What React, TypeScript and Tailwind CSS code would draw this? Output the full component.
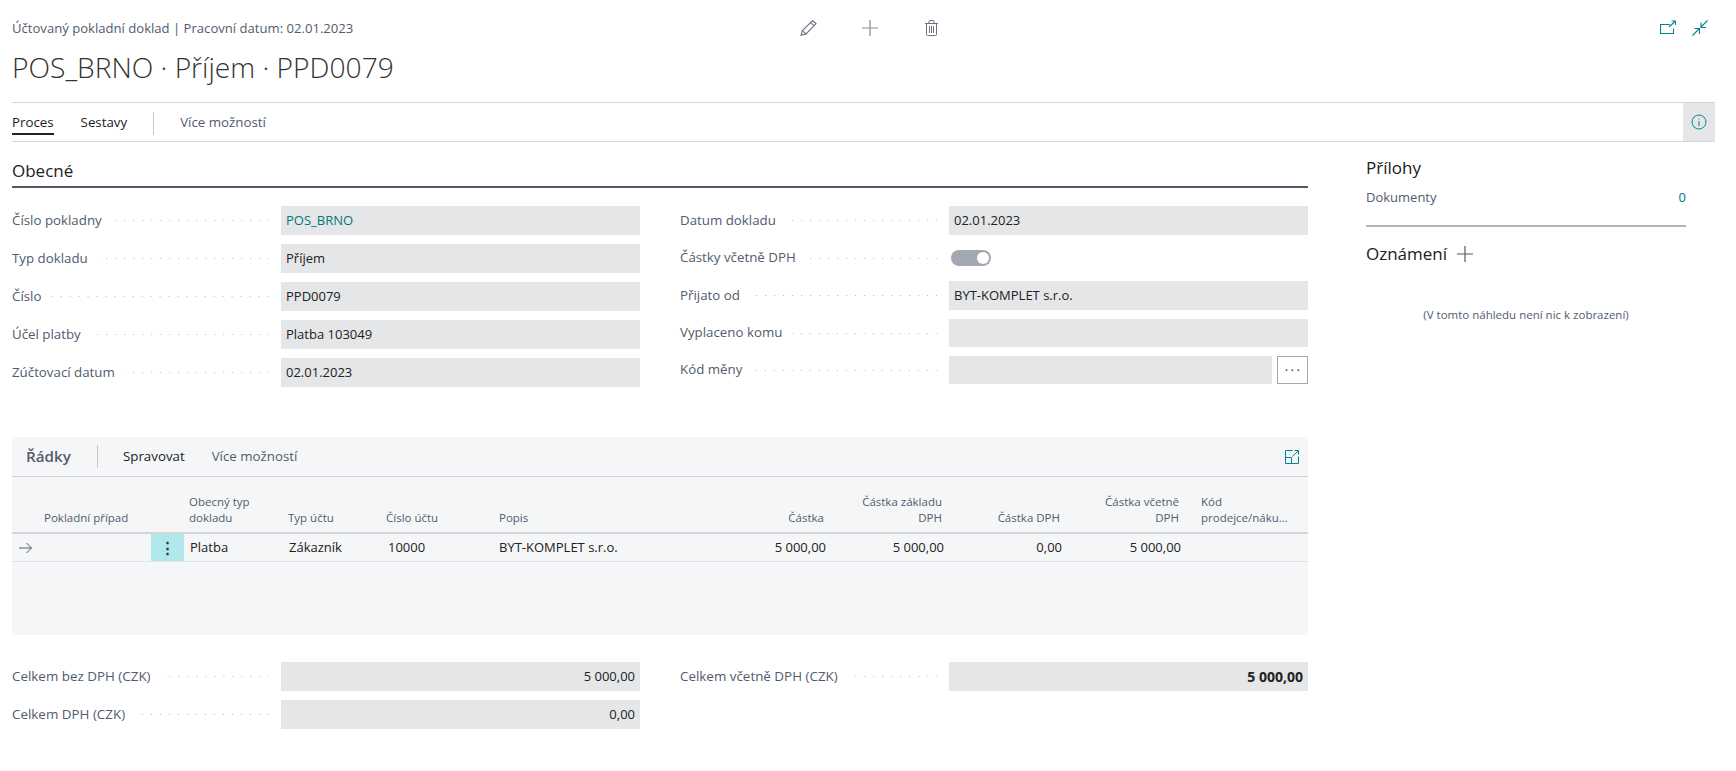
import type { ReactNode } from 'react';

const font = "font-['Open_Sans',sans-serif]";

// teal used by links and the small action icons
const teal = '#00868c';

const columns = 'grid-cols-[33px_106px_33px_104px_98px_113px_200px_127px_118px_118px_119px_20px_107px]';

function Leader() {
  return <div className="h-px flex-1 min-w-0 bg-[linear-gradient(to_left,#b4b8be_1px,transparent_1px)] bg-[length:9px_1px] bg-repeat-x bg-right" />;
}

function Field({ label, value, link, height = 'h-[29px]', children }: { label: string; value?: string; link?: boolean; height?: string; children?: ReactNode }) {
  return (
    <div className={`flex items-center ${height}`}>
      <div className="flex items-center w-[257px] shrink-0 gap-2.5">
        <span className="text-[13.3px] text-[#505c6d] whitespace-nowrap">{label}</span>
        <Leader />
      </div>
      <div className="ml-3 flex-1 h-full">
        {children ?? (
          <div className={`h-full bg-[#e5e6e8] px-[5px] flex items-center text-[13px] ${link ? 'text-[#00777c]' : 'text-[#212121]'}`}>{value}</div>
        )}
      </div>
    </div>
  );
}

function Total({ label, value, bold }: { label: string; value: string; bold?: boolean }) {
  return (
    <div className="flex items-center h-[29px]">
      <div className="flex items-center w-[257px] shrink-0 gap-2.5">
        <span className="text-[13.4px] text-[#505c6d] whitespace-nowrap">{label}</span>
        <Leader />
      </div>
      <div className={`ml-3 flex-1 h-full bg-[#e5e6e8] px-[5px] flex items-center justify-end text-[#212121] ${bold ? 'text-[14px] font-bold' : 'text-[13px]'}`}>{value}</div>
    </div>
  );
}

function PencilIcon() {
  return (
    <svg width="17" height="16" viewBox="0 0 17 16" fill="none" stroke="#6b7280" strokeWidth="1.1">
      <path d="M12.5 0.8 L16 3.6 L6 14 L1 15.3 L2.4 10.6 Z" />
      <path d="M10.6 2.8 L14 5.6" />
      <path d="M2.4 10.6 L6 14" />
    </svg>
  );
}

function PlusIcon({ size = 16, color = '#8a8d95' }: { size?: number; color?: string }) {
  return (
    <svg width={size} height={size} viewBox="0 0 16 16" fill="none" stroke={color} strokeWidth="1.2">
      <path d="M8 0 V16 M0 8 H16" />
    </svg>
  );
}

function TrashIcon() {
  return (
    <svg width="13" height="16" viewBox="0 0 13 16" fill="none" stroke="#6b7280" strokeWidth="1">
      <path d="M0 3.5 H13 M4 3.5 V1.5 Q4 0.5 5 0.5 H8 Q9 0.5 9 1.5 V3.5 M1.5 3.5 V14.5 Q1.5 15.5 2.5 15.5 H10.5 Q11.5 15.5 11.5 14.5 V3.5 M4.5 6 V13 M6.5 6 V13 M8.5 6 V13" />
    </svg>
  );
}

function ShareIcon() {
  return (
    <svg width="16" height="16" viewBox="0 0 16 16" fill="none" stroke={teal} strokeWidth="1.1">
      <path d="M10 4.5 H0.5 V13.5 H13.5 V8.5" />
      <path d="M9 7 L15 1.5 M11.5 1 H15.5 V5" />
    </svg>
  );
}

function CollapseIcon() {
  return (
    <svg width="16" height="16" viewBox="0 0 16 16" fill="none" stroke={teal} strokeWidth="1.1">
      <path d="M15.5 0.5 L9 7 M9 2.5 V7.5 H14" />
      <path d="M0.5 15.5 L7 9 M2.5 8.5 H7.5 V14" />
    </svg>
  );
}

function ExpandIcon() {
  return (
    <svg width="14" height="14" viewBox="0 0 14 14" fill="none" stroke={teal} strokeWidth="1">
      <path d="M7.5 0.5 H0.5 V13.5 H13.5 V6.5" />
      <path d="M0.5 7.5 H6.5 V13.5" />
      <path d="M7.5 6.5 L13 1 M9.5 0.5 H13.5 V4.5" />
    </svg>
  );
}

function InfoIcon() {
  return (
    <svg width="16" height="16" viewBox="0 0 16 16" fill="none" stroke={teal} strokeWidth="1">
      <circle cx="8" cy="8" r="7" />
      <path d="M8 7 V12 M8 4.5 V5.5" />
    </svg>
  );
}

function ArrowIcon() {
  return (
    <svg width="13" height="12" viewBox="0 0 13 12" fill="none" stroke="#505c6d" strokeWidth="1">
      <path d="M0 6 H12.5 M7.5 1 L12.5 6 L7.5 11" />
    </svg>
  );
}

export default function App() {
  return (
    <div className={`${font} w-[1736px] h-[771px] overflow-hidden bg-white pl-3 text-[#212121]`}>
      <div className="w-[1703px]">
        <div className="relative h-[102px]">
          <div className="pt-[19px] text-[13.1px] leading-[18px] text-[#505c6d]">Účtovaný pokladní doklad | Pracovní datum: 02.01.2023</div>
          <h1 className="mt-[9px] text-[28.2px] leading-[42px] font-light text-[#333]">POS_BRNO · Příjem · PPD0079</h1>
          <div className="absolute top-[20px] left-[788px] flex items-center">
            <PencilIcon />
            <div className="ml-[45px]"><PlusIcon /></div>
            <div className="ml-[47px]"><TrashIcon /></div>
          </div>
          <div className="absolute top-[20px] left-[1648px] flex items-center gap-[16px]">
            <ShareIcon />
            <CollapseIcon />
          </div>
        </div>

        <div className="flex items-stretch h-[40px] border-y border-[#d4d5d8]">
          <div className="flex items-center flex-1 text-[13.3px] pt-[2px]">
            <div className="relative h-full flex items-center">
              Proces
              <div className="absolute bottom-[6px] left-0 right-0 h-[2px] bg-[#212121]" />
            </div>
            <span className="ml-[27px]">Sestavy</span>
            <div className="ml-[26px] w-px h-[23px] bg-[#c8cacd]" />
            <span className="ml-[26px] text-[#505c6d]">Více možností</span>
          </div>
          <div className="w-[32px] bg-[#e5e6e8] flex items-center justify-center"><InfoIcon /></div>
        </div>

        <div className="flex">
          <div className="w-[1296px]">
            <div className="mt-[18px] h-[28px] border-b-2 border-[#505a68] text-[17px] leading-[22px] font-medium">Obecné</div>

            <div className="mt-[18px] grid grid-cols-2 gap-x-10">
              <div className="flex flex-col gap-[9px]">
                <Field label="Číslo pokladny" value="POS_BRNO" link />
                <Field label="Typ dokladu" value="Příjem" />
                <Field label="Číslo" value="PPD0079" />
                <Field label="Účel platby" value="Platba 103049" />
                <Field label="Zúčtovací datum" value="02.01.2023" />
              </div>
              <div className="flex flex-col gap-[9px]">
                <Field label="Datum dokladu" value="02.01.2023" />
                <Field label="Částky včetně DPH" height="h-[28px]">
                  <div className="h-full flex items-center pl-[2px]">
                    <div className="w-[40px] h-[16px] rounded-full bg-[#a3a8b2] flex items-center justify-end pr-[2px]">
                      <div className="w-[12px] h-[12px] rounded-full bg-white" />
                    </div>
                  </div>
                </Field>
                <Field label="Přijato od" value="BYT-KOMPLET s.r.o." />
                <Field label="Vyplaceno komu" value="" height="h-[28px]" />
                <Field label="Kód měny" height="h-[28px]">
                  <div className="h-full flex gap-[5px]">
                    <div className="flex-1 bg-[#e5e6e8]" />
                    <button className="w-[31px] border border-[#a6a8ac] bg-white flex items-center justify-center text-[#333] text-[13px] leading-none tracking-[2.5px] pl-[2px]">···</button>
                  </div>
                </Field>
              </div>
            </div>

            <div className="mt-[50px] h-[198px] bg-[#f5f6f8]">
              <div className="flex items-center h-[40px] border-b border-[#d4d5d8]">
                <span className="ml-[14px] w-[70px] text-[15.2px] font-semibold text-[#505c6d]">Řádky</span>
                <div className="ml-[1px] w-px h-[23px] bg-[#c8cacd]" />
                <span className="ml-[25px] text-[13.3px]">Spravovat</span>
                <span className="ml-[27px] text-[13.3px] text-[#505c6d]">Více možností</span>
                <div className="ml-auto mr-[9px]"><ExpandIcon /></div>
              </div>

              <div className={`grid ${columns} h-[57px] border-b-2 border-[#d4d5d8] text-[11.5px] leading-[16px] text-[#505c6d] items-end pb-[6px]`}>
                <div />
                <div className="whitespace-nowrap -ml-px">Pokladní případ</div>
                <div />
                <div className="pl-[5px]">Obecný typ<br />dokladu</div>
                <div>Typ účtu</div>
                <div>Číslo účtu</div>
                <div>Popis</div>
                <div className="text-right pr-[2px]">Částka</div>
                <div className="text-right pr-[2px]">Částka základu<br />DPH</div>
                <div className="text-right pr-[2px]">Částka DPH</div>
                <div className="text-right pr-[2px]">Částka včetně<br />DPH</div>
                <div />
                <div>Kód<br />prodejce/náku...</div>
              </div>

              <div className={`grid ${columns} h-[28px] border-b border-[#e2e3e6] text-[13px] items-center`}>
                <div className="flex justify-center pr-[6px]"><ArrowIcon /></div>
                <div />
                <div className="h-full bg-[#b0e8ec] flex items-center justify-center text-[#333] font-bold text-[15px]">⋮</div>
                <div className="pl-[6px]">Platba</div>
                <div className="pl-[1px]">Zákazník</div>
                <div className="pl-[2px]">10000</div>
                <div className="whitespace-nowrap">BYT-KOMPLET s.r.o.</div>
                <div className="text-right whitespace-nowrap">5 000,00</div>
                <div className="text-right whitespace-nowrap">5 000,00</div>
                <div className="text-right">0,00</div>
                <div className="text-right whitespace-nowrap">5 000,00</div>
                <div />
                <div />
              </div>
            </div>

            <div className="mt-[27px] grid grid-cols-2 gap-x-10">
              <div className="flex flex-col gap-[9px]">
                <Total label="Celkem bez DPH (CZK)" value="5 000,00" />
                <Total label="Celkem DPH (CZK)" value="0,00" />
              </div>
              <div>
                <Total label="Celkem včetně DPH (CZK)" value="5 000,00" bold />
              </div>
            </div>
          </div>

          <div className="ml-[58px] w-[320px] pt-[15px]">
            <div className="text-[17px] leading-[22px]">Přílohy</div>
            <div className="mt-[9px] flex justify-between text-[13px] leading-[18px] text-[#505c6d]">
              <span>Dokumenty</span>
              <span className="text-[#00777c]">0</span>
            </div>
            <div className="mt-[19px] h-[2px] bg-[#b0b4b8]" />
            <div className="mt-[16px] flex items-center gap-[10px] text-[17px] leading-[22px]">
              Oznámení
              <PlusIcon color="#505c6d" />
            </div>
            <div className="mt-[41px] text-center text-[11.5px] text-[#505c6d]">(V tomto náhledu není nic k zobrazení)</div>
          </div>
        </div>
      </div>
    </div>
  );
}
